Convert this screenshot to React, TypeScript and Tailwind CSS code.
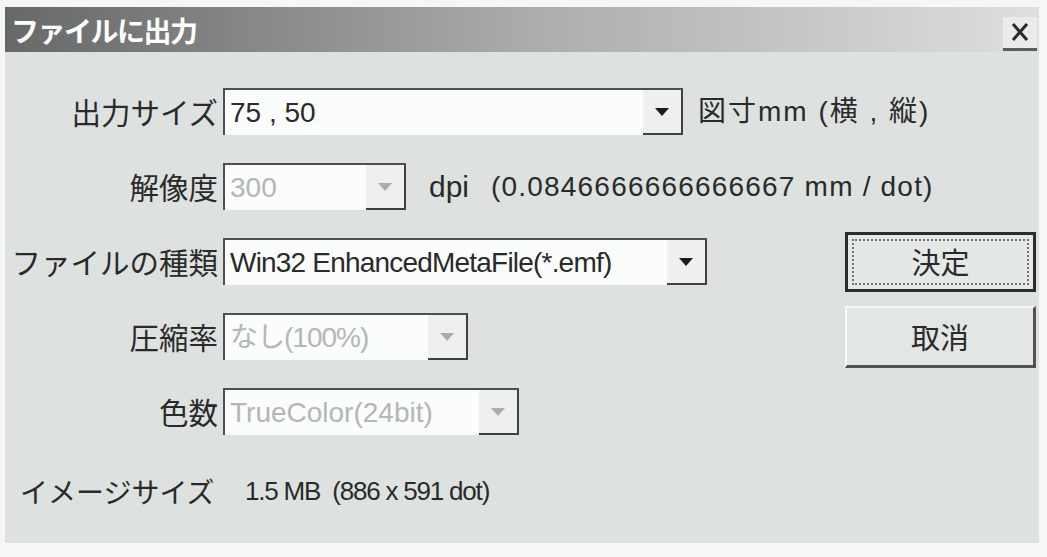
const jp = "font-['Noto_Sans_CJK_JP',sans-serif]"
const lat = "font-['Liberation_Sans','Noto_Sans_CJK_JP',sans-serif]"

function Arrow({ disabled }: { disabled?: boolean }) {
  return (
    <svg width="14" height="8" viewBox="0 0 14 8">
      <path d="M0 0 H14 L7 8 Z" fill={disabled ? "#a9adab" : "#1c1c1c"} />
    </svg>
  )
}

function Combo({ width, value, disabled, track }: { width: string; value: string; disabled?: boolean; track?: string }) {
  return (
    <div className={`flex h-[47px] ${width} border-t-2 border-l-2 border-[#4e504f] bg-[#fbfcfc]`}>
      <div
        className={`flex-1 flex items-center pl-[5px] text-[28px] leading-none whitespace-nowrap overflow-hidden ${lat} ${
          track ?? ""
        } ${disabled ? "text-[#b3b7b5]" : "text-[#2a2a2a]"}`}
      >
        {value}
      </div>
      <div className="w-[40px] flex items-center justify-center bg-[#eef0ef] border-r-2 border-b-2 border-[#3f4140]">
        <Arrow disabled={disabled} />
      </div>
    </div>
  )
}

function Label({ text }: { text: string }) {
  return (
    <div className={`w-[213px] mr-[5px] text-right text-[29.5px] leading-none text-[#2a2a2a] whitespace-nowrap ${jp}`}>
      {text}
    </div>
  )
}

export default function App() {
  return (
    <div className="w-[1047px] h-[557px] bg-[#f5f7f6] pt-[7px] pl-[5px]">
      <div className="w-[1034px] h-[536px] bg-[#dde2e0] flex flex-col">
        {/* title bar */}
        <div className="h-[45px] flex items-center justify-between pl-[6px] pr-[2px] bg-gradient-to-r from-[#676968] via-[#a9acab] to-[#dde0de]">
          <div className={`text-[28px] font-bold text-white leading-none tracking-[-1.5px] ${jp}`}>ファイルに出力</div>
          <div className="w-[34px] h-[34px] mt-[8px] flex items-center justify-center bg-[#e9eceb] border-b-[3px] border-[#5a5c5b]">
            <svg width="18" height="20" viewBox="0 0 18 20">
              <path d="M2 2 L16 18 M16 2 L2 18" stroke="#2a2a2a" strokeWidth="3" />
            </svg>
          </div>
        </div>

        {/* body */}
        <div className="flex flex-col gap-[28px] pt-[36px] pr-[3px]">
          <div className="flex items-center h-[47px]">
            <Label text="出力サイズ" />
            <Combo width="w-[460px]" value="75 , 50" />
            <div className={`ml-[15px] text-[28px] leading-none text-[#2a2a2a] whitespace-nowrap tracking-[2px] ${lat}`}>
              図寸mm (横 , 縦)
            </div>
          </div>

          <div className="flex items-center h-[47px]">
            <Label text="解像度" />
            <Combo width="w-[183px]" value="300" disabled />
            <div className={`ml-[23px] w-[62px] text-[30px] leading-none text-[#2a2a2a] ${lat}`}>dpi</div>
            <div className={`text-[28px] leading-none text-[#2a2a2a] whitespace-nowrap tracking-[1.2px] ${lat}`}>
              (0.0846666666666667 mm / dot)
            </div>
          </div>

          <div className="flex items-center h-[47px]">
            <Label text="ファイルの種類" />
            <Combo width="w-[484px]" value="Win32 EnhancedMetaFile(*.emf)" track="tracking-[-0.8px]" />
            <button className={`ml-auto w-[191px] h-[60px] p-[4px] border-[3px] border-[#2b2d2c] bg-[#e4e8e6] ${jp}`}>
              <div className="w-full h-full flex items-center justify-center border-2 border-dotted border-[#707372] text-[29px] leading-none text-[#2a2a2a]">
                決定
              </div>
            </button>
          </div>

          <div className="flex items-center h-[47px]">
            <Label text="圧縮率" />
            <Combo width="w-[245px]" value="なし(100%)" disabled track="tracking-[-1px]" />
            <button
              className={`ml-auto w-[191px] h-[62px] flex items-center justify-center border-t-2 border-l-2 border-t-[#f7f8f8] border-l-[#f7f8f8] border-r-[3px] border-b-[3px] border-r-[#505251] border-b-[#505251] bg-[#e2e6e4] text-[29px] leading-none text-[#2a2a2a] ${jp}`}
            >
              取消
            </button>
          </div>

          <div className="flex items-center h-[47px]">
            <Label text="色数" />
            <Combo width="w-[296px]" value="TrueColor(24bit)" disabled />
          </div>

          <div className="flex items-center h-[47px] mt-[4px] pl-[15px]">
            <div className={`w-[225px] text-[28px] leading-none text-[#2a2a2a] whitespace-nowrap ${jp}`}>イメージサイズ</div>
            <div className={`text-[26px] leading-none text-[#2a2a2a] whitespace-nowrap tracking-[-1.2px] ${lat}`}>
              1.5 MB&nbsp;&nbsp;(886 x 591 dot)
            </div>
          </div>
        </div>
      </div>
    </div>
  )
}
